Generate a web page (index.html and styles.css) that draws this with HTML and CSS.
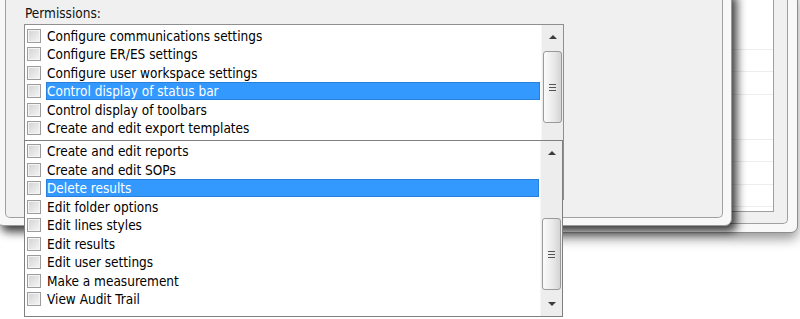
FILE: index.html
```html
<!DOCTYPE html>
<html lang="en">
<head>
    <meta charset="UTF-8">
    <title>Permissions</title>
    <link rel="stylesheet" href="styles.css">
</head>
<body>
    <div class="desktop">
        <!-- Window behind the dialog -->
        <div class="back-window">
            <div class="back-panel">
                <div class="back-table"></div>
            </div>
        </div>

        <!-- Main dialog -->
        <div class="dialog">
            <div class="panel">
                <div class="field-label">Permissions:</div>
                <div class="listbox listbox-main">
                    <ul class="items">
                        <li><span class="check"></span><span class="text">Configure communications settings</span></li>
                        <li><span class="check"></span><span class="text">Configure ER/ES settings</span></li>
                        <li><span class="check"></span><span class="text">Configure user workspace settings</span></li>
                        <li class="selected"><span class="check"></span><span class="text">Control display of status bar</span></li>
                        <li><span class="check"></span><span class="text">Control display of toolbars</span></li>
                        <li><span class="check"></span><span class="text">Create and edit export templates</span></li>
                    </ul>
                    <div class="scrollbar">
                        <div class="arrow-btn"><span class="arrow-up"></span></div>
                        <div class="track">
                            <div class="thumb thumb-top"><span class="grip"></span></div>
                        </div>
                    </div>
                </div>
            </div>
        </div>

        <!-- Dropped-down list over the dialog -->
        <div class="listbox listbox-drop">
            <ul class="items">
                <li><span class="check"></span><span class="text">Create and edit reports</span></li>
                <li><span class="check"></span><span class="text">Create and edit SOPs</span></li>
                <li class="selected"><span class="check"></span><span class="text">Delete results</span></li>
                <li><span class="check"></span><span class="text">Edit folder options</span></li>
                <li><span class="check"></span><span class="text">Edit lines styles</span></li>
                <li><span class="check"></span><span class="text">Edit results</span></li>
                <li><span class="check"></span><span class="text">Edit user settings</span></li>
                <li><span class="check"></span><span class="text">Make a measurement</span></li>
                <li><span class="check"></span><span class="text">View Audit Trail</span></li>
            </ul>
            <div class="scrollbar">
                <div class="arrow-btn"><span class="arrow-up"></span></div>
                <div class="track">
                    <div class="thumb thumb-mid"><span class="grip"></span></div>
                </div>
                <div class="arrow-btn"><span class="arrow-down"></span></div>
            </div>
        </div>
    </div>
</body>
</html>
```

FILE: styles.css
```css
body {
    margin: 0;
    padding: 0;
    background: #fff;
    font-family: 'DejaVu Sans Condensed', 'DejaVu Sans', sans-serif;
    font-size: 13.5px;
    color: #000;
    overflow: hidden;
}
.desktop {
    position: relative;
    width: 800px;
    height: 319px;
    overflow: hidden;
}

/* window in the background */
.back-window {
    position: absolute;
    top: -10px;
    left: 300px;
    right: 2px;
    height: 243px;
    box-sizing: border-box;
    padding: 0 9px 8px 0;
    background: #f8f8f8;
    border: 1px solid #8d8d8d;
    border-radius: 0 0 7px 0;
    box-shadow: 0 6px 12px rgba(0, 0, 0, 0.4);
}
.back-panel {
    height: 100%;
    box-sizing: border-box;
    display: flex;
    justify-content: flex-end;
    align-items: flex-start;
    padding-right: 13px;
    background: #f0f0f0;
    border: 1px solid #a0a0a0;
    border-top: none;
    border-radius: 0 0 5px 0;
}
.back-table {
    width: 200px;
    height: 220px;
    background-color: #fff;
    background-image: repeating-linear-gradient(to bottom, transparent 0, transparent 21.5px, #ededed 21.5px, #ededed 22.5px);
    background-position: 0 14px;
    border-right: 1px solid #a0a0a0;
    border-bottom: 1px solid #a0a0a0;
}

/* dialog */
.dialog {
    position: absolute;
    top: -10px;
    left: -4px;
    width: 736px;
    height: 236px;
    box-sizing: border-box;
    padding: 0 8px 7px 8px;
    background: #f8f8f8;
    border: 1px solid #9a9a9a;
    border-radius: 0 0 7px 7px;
    box-shadow: 5px 6px 10px rgba(0, 0, 0, 0.75);
}
.panel {
    height: 100%;
    box-sizing: border-box;
    padding: 14px 0 0 18px;
    background: #f0f0f0;
    border: 1px solid #a0a0a0;
    border-top: none;
    border-radius: 0 0 5px 5px;
}
.field-label {
    height: 16px;
    line-height: 16px;
    padding-left: 1px;
    margin-bottom: 3px;
    color: #111;
}

/* list boxes */
.listbox {
    display: flex;
    box-sizing: border-box;
    background: #fff;
    border: 1px solid #8f8f8f;
}
.listbox-main {
    width: 540px;
    height: 176px;
}
.listbox-drop {
    position: absolute;
    top: 140px;
    left: 24px;
    width: 539px;
    height: 177px;
    border-color: #7f7f7f;
}
.items {
    list-style: none;
    margin: 0;
    padding: 1px 0 0 0;
    flex: 1;
}
.listbox-main .items {
    padding-top: 1.5px;
}
.items li {
    display: flex;
    align-items: center;
    height: 18.5px;
    padding-right: 1px;
}
.check {
    width: 12px;
    height: 12px;
    margin: 0 5px 0 2px;
    border: 1px solid #9c9c9c;
    background: linear-gradient(135deg, #d2d2d2, #f6f6f6);
    box-shadow: inset 0 0 0 1px #f4f4f4;
    flex: none;
}
.text {
    flex: 1;
    height: 18px;
    line-height: 18px;
    padding-left: 1px;
    white-space: nowrap;
}
.selected .text {
    background: #3399ff;
    color: #fff;
    box-shadow: inset 0 0 0 1px rgba(20, 70, 140, 0.3);
}

/* scrollbars */
.scrollbar {
    width: 21px;
    display: flex;
    flex-direction: column;
    background: #ededed;
    border-left: 1px solid #f7f7f7;
}
.arrow-btn {
    height: 24px;
    display: flex;
    justify-content: center;
    align-items: center;
    flex: none;
}
.arrow-up {
    width: 0;
    height: 0;
    border-left: 4px solid transparent;
    border-right: 4px solid transparent;
    border-bottom: 4px solid #3c3c3c;
}
.arrow-down {
    width: 0;
    height: 0;
    border-left: 4px solid transparent;
    border-right: 4px solid transparent;
    border-top: 4px solid #3c3c3c;
}
.track {
    flex: 1;
    padding: 0 1px;
}
.thumb {
    height: 72px;
    box-sizing: border-box;
    display: flex;
    justify-content: center;
    align-items: center;
    border: 1px solid #9a9a9a;
    border-radius: 3px;
    background: linear-gradient(to right, #fbfbfb, #e8e8e8 60%, #d4d4d4);
}
.thumb-top {
    margin-top: 2px;
}
.thumb-mid {
    margin-top: 53px;
}
.grip {
    width: 7px;
    height: 7px;
    background: repeating-linear-gradient(to bottom, #555 0, #555 1px, transparent 1px, transparent 3px);
}
```
